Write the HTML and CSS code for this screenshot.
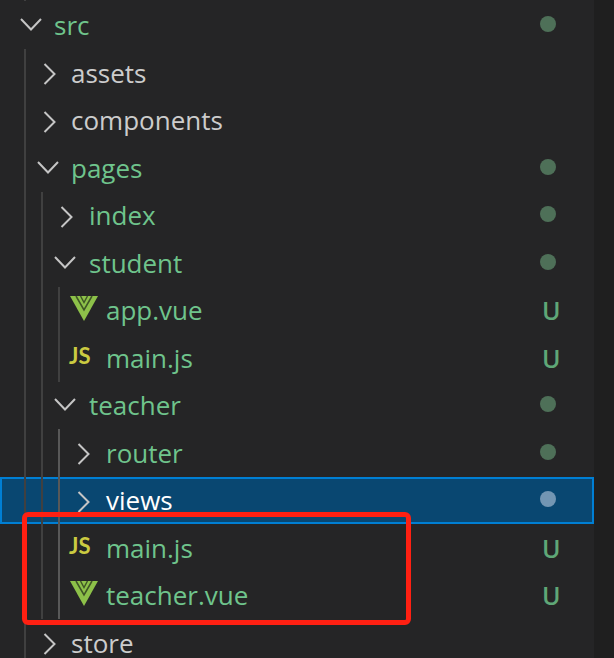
FILE: index.html
```html
<!DOCTYPE html>
<html lang="en">
<head>
  <meta charset="UTF-8">
  <title>explorer</title>
  <link rel="stylesheet" href="styles.css">
</head>
<body>
  <svg class="defs" width="0" height="0">
    <symbol id="open" viewBox="0 0 22 13"><path d="M1 1 L11 11.5 L21 1" fill="none" stroke="currentColor" stroke-width="2"/></symbol>
    <symbol id="closed" viewBox="0 0 13 22"><path d="M1.5 1 L11.5 11 L1.5 21" fill="none" stroke="currentColor" stroke-width="2"/></symbol>
    <symbol id="vue" viewBox="0 0 28 25">
      <path d="M0 0 H28 L14 25 Z" fill="#8dc149"/>
      <path d="M6 0 L14 14 L22 0" fill="none" stroke="#3f5526" stroke-width="1.6"/>
      <path d="M10.5 0 L14 6.5 L17.5 0" fill="none" stroke="#3f5526" stroke-width="1.4"/>
    </symbol>
  </svg>

  <div class="sidebar">
    <div class="tree">
      <span class="guide guide-top"></span>

      <div class="row depth-0 changed">
        <svg class="chev-open"><use href="#open"/></svg><span class="name">src</span><span class="dot"></span>
      </div>
      <div class="group">
        <span class="guide guide-1"></span>
        <div class="row depth-1">
          <svg class="chev-closed"><use href="#closed"/></svg><span class="name">assets</span>
        </div>
        <div class="row depth-1">
          <svg class="chev-closed"><use href="#closed"/></svg><span class="name">components</span>
        </div>
        <div class="row depth-1 changed">
          <svg class="chev-open"><use href="#open"/></svg><span class="name">pages</span><span class="dot"></span>
        </div>
        <div class="group">
          <span class="guide guide-2"></span>
          <div class="row depth-2 changed">
            <svg class="chev-closed"><use href="#closed"/></svg><span class="name">index</span><span class="dot"></span>
          </div>
          <div class="row depth-2 changed">
            <svg class="chev-open"><use href="#open"/></svg><span class="name">student</span><span class="dot"></span>
          </div>
          <div class="group">
            <span class="guide guide-3"></span>
            <div class="row depth-3 changed">
              <svg class="file-vue"><use href="#vue"/></svg><span class="name">app.vue</span><span class="letter">U</span>
            </div>
            <div class="row depth-3 changed">
              <span class="file-js">JS</span><span class="name">main.js</span><span class="letter">U</span>
            </div>
          </div>
          <div class="row depth-2 changed">
            <svg class="chev-open"><use href="#open"/></svg><span class="name">teacher</span><span class="dot"></span>
          </div>
          <div class="group">
            <span class="guide guide-3 guide-active"></span>
            <div class="row depth-3 changed">
              <svg class="chev-closed"><use href="#closed"/></svg><span class="name">router</span><span class="dot"></span>
            </div>
            <div class="row depth-3 selected">
              <svg class="chev-closed"><use href="#closed"/></svg><span class="name">views</span><span class="dot"></span>
            </div>
            <div class="row depth-3 changed">
              <span class="file-js">JS</span><span class="name">main.js</span><span class="letter">U</span>
            </div>
            <div class="row depth-3 changed">
              <svg class="file-vue"><use href="#vue"/></svg><span class="name">teacher.vue</span><span class="letter">U</span>
            </div>
          </div>
        </div>
        <div class="row depth-1">
          <svg class="chev-closed"><use href="#closed"/></svg><span class="name">store</span>
        </div>
      </div>
    </div>
    <div class="scrollbar"></div>
  </div>

  <div class="red-box"></div>
</body>
</html>
```

FILE: styles.css
```css
html, body {
    margin: 0;
    padding: 0;
    height: 658px;
    overflow: hidden;
    background-color: #252526;
}

.defs {
    position: absolute;
}

.sidebar {
    display: flex;
    height: 658px;
    overflow: hidden;
    font-family: "Open Sans", sans-serif;
    font-size: 26px;
    line-height: 1;
}

.tree {
    position: relative;
    flex: 1;
    padding-top: 1.5px;
}

.scrollbar {
    width: 20px;
    background-color: #1f1f1f;
}

.group {
    position: relative;
}

.row {
    position: relative;
    display: flex;
    align-items: center;
    height: 47.5px;
    box-sizing: border-box;
    color: #cccccc;
    white-space: nowrap;
}

.row.changed .name {
    color: #6fc48c;
}

.depth-0 { padding-left: 20px; }
.depth-1 { padding-left: 37px; }
.depth-2 { padding-left: 54px; }
.depth-3 { padding-left: 71px; }

.name {
    position: absolute;
    top: 50%;
    transform: translateY(-50%);
}

.depth-0 .name { left: 54px; }
.depth-1 .name { left: 71px; }
.depth-2 .name { left: 89px; }
.depth-3 .name { left: 106px; }

.chev-open {
    width: 22px;
    height: 13px;
    margin-bottom: 1px;
    color: #c5c5c5;
}

.chev-closed {
    width: 13px;
    height: 22px;
    margin-left: 6px;
    margin-top: 3px;
    color: #c5c5c5;
}

.file-vue {
    width: 28px;
    height: 25px;
    margin-left: -1px;
    margin-bottom: 4px;
}

.file-js {
    margin-left: -2px;
    margin-bottom: 3px;
    font-family: Lato, sans-serif;
    font-size: 22px;
    font-weight: 700;
    color: #cbcb41;
}

.dot {
    position: absolute;
    left: 540px;
    top: 50%;
    width: 16px;
    height: 16px;
    margin-top: -9px;
    border-radius: 50%;
    background-color: #4e7058;
}

.letter {
    position: absolute;
    left: 542px;
    top: 50%;
    transform: translateY(-50%);
    font-size: 25px;
    font-weight: 600;
    color: #5fa777;
}

/* border eats 2px, pull the contents back so they line up with the other rows */
.selected {
    background-color: #094771;
    border: 2px solid #007fd4;
    padding-left: 69px;
    color: #ffffff;
}

.selected .name {
    left: 104px;
}

.selected .dot {
    left: 538px;
    background-color: #7396b3;
}

/* indent guides sit on top of the rows */
.guide {
    position: absolute;
    z-index: 1;
    width: 2px;
    background-color: #404040;
}

.guide-top {
    left: 24px;
    top: 0;
    height: 1px;
}

.guide-1 {
    left: 24px;
    top: 0;
    bottom: 0;
}

.guide-2 {
    left: 41px;
    top: 0;
    bottom: 0;
}

.guide-3 {
    left: 58px;
    top: 0;
    bottom: 0;
}

.guide-active {
    background-color: #585858;
}

.red-box {
    position: absolute;
    z-index: 2;
    left: 22px;
    top: 512px;
    width: 389px;
    height: 113px;
    box-sizing: border-box;
    border: 5px solid #ff2012;
    border-radius: 6px;
}
```
